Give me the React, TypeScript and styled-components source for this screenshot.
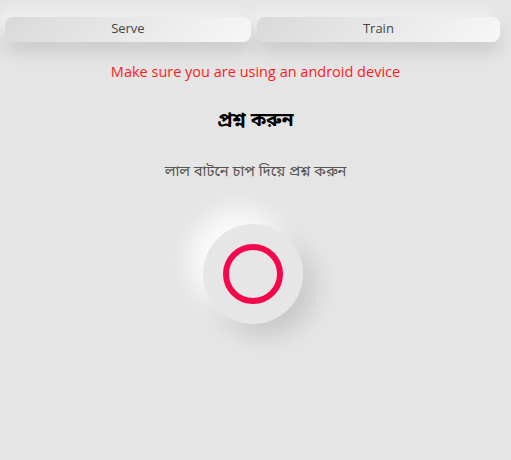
import React from "react";
import styled, { createGlobalStyle } from "styled-components";

const Global = createGlobalStyle`
  html, body { margin: 0; padding: 0; background: #e5e5e5; }
  body { font-family: "Open Sans", "Noto Sans", "Noto Sans Bengali", sans-serif; min-height: 460px; }
`;

const Page = styled.div`
  display: flex;
  flex-direction: column;
  align-items: stretch;
  padding-top: 17px;
`;

const Tabs = styled.div`
  display: flex;
  gap: 6px;
  padding: 0 11px 0 5px;
`;

const Tab = styled.button`
  flex: 1 1 auto;
  height: 25px;
  border: none;
  border-radius: 8px;
  background: linear-gradient(135deg, #d9d9d9 0%, #f7f7f7 100%);
  box-shadow: 0 10px 18px rgba(0, 0, 0, 0.12), -6px -6px 14px rgba(255, 255, 255, 0.5);
  font-family: "Open Sans", sans-serif;
  font-size: 13px;
  line-height: 22px;
  color: #444;
  padding: 0 0 3px;
  cursor: pointer;
`;

const Warning = styled.p`
  margin: 20px 0 0;
  text-align: center;
  color: #ff1a1a;
  font-family: "Open Sans", sans-serif;
  font-size: 14.5px;
  line-height: 20px;
`;

const Title = styled.h2`
  margin: 25px 0 0;
  text-align: center;
  font-size: 19px;
  font-weight: 700;
  color: #000;
  line-height: 24px;
`;

const Hint = styled.p`
  margin: 27px 0 0;
  text-align: center;
  font-size: 14.7px;
  color: #555;
  line-height: 24px;
`;

const RecordWrap = styled.div`
  display: flex;
  justify-content: center;
  margin-top: 42px;
`;

const RecordButton = styled.button`
  width: 100px;
  height: 100px;
  border-radius: 50%;
  border: none;
  background: #e6e6e6;
  box-shadow: -14px -14px 26px rgba(255, 255, 255, 0.85), 12px 12px 24px rgba(0, 0, 0, 0.13);
  display: flex;
  align-items: center;
  justify-content: center;
  padding: 0;
  cursor: pointer;
  margin-right: 5px;
`;

const Ring = styled.span`
  width: 48px;
  height: 48px;
  border-radius: 50%;
  border: 6px solid #f5074b;
`;

export default function App() {
  return (
    <>
      <Global />
      <Page>
        <Tabs>
          <Tab>Serve</Tab>
          <Tab>Train</Tab>
        </Tabs>
        <Warning>Make sure you are using an android device</Warning>
        <Title>প্রশ্ন করুন</Title>
        <Hint>লাল বাটনে চাপ দিয়ে প্রশ্ন করুন</Hint>
        <RecordWrap>
          <RecordButton aria-label="record">
            <Ring />
          </RecordButton>
        </RecordWrap>
      </Page>
    </>
  );
}
